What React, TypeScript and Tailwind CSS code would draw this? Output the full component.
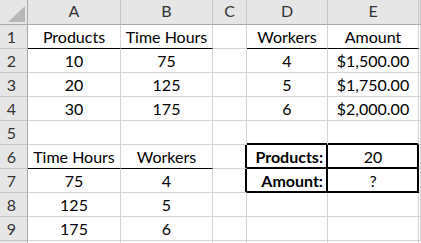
import type { ReactNode } from "react";

type CellProps = {
  children?: ReactNode;
  className?: string;
  align?: "center" | "right";
  bold?: boolean;
};

function Cell({ children, className = "", align = "center", bold = false }: CellProps) {
  return (
    <div
      className={`flex items-end border-b border-r border-[#d4d4d4] pb-[3px] text-[16px] leading-none text-black ${
        align === "right" ? "justify-end pr-[4px]" : "justify-center"
      } ${bold ? "font-bold" : ""} ${className}`}
    >
      {children}
    </div>
  );
}

function ColHead({ label }: { label: string }) {
  return (
    <div className="flex items-end justify-center border-b border-r border-b-[#ababab] border-r-[#c6c6c6] bg-[#e6e6e6] pb-[5px] text-[16px] leading-none text-[#333]">
      {label}
    </div>
  );
}

function RowHead({ n }: { n?: number }) {
  return (
    <div className="flex items-end justify-center border-b border-r border-b-[#c6c6c6] border-r-[#ababab] bg-[#e6e6e6] pb-[3px] pr-[4px] text-[16px] leading-none text-[#333]">
      {n}
    </div>
  );
}

const top = [
  ["10", "75", "4", "$1,500.00"],
  ["20", "125", "5", "$1,750.00"],
  ["30", "175", "6", "$2,000.00"],
];

export default function App() {
  return (
    <div
      className="grid h-[243px] w-[421px] grid-cols-[28px_93px_92px_34px_81px_91px_1fr] grid-rows-[25px_repeat(9,24px)_2px] overflow-hidden bg-white"
      style={{ fontFamily: "Lato, 'Noto Sans', sans-serif" }}
    >
      {/* header row */}
      <div className="flex items-end justify-end border-b border-r border-b-[#ababab] border-r-[#ababab] bg-[#e6e6e6] p-[2px]">
        <svg width="17" height="16" viewBox="0 0 17 16">
          <path d="M17 0 L17 16 L0 16 Z" fill="#b8b8b8" />
        </svg>
      </div>
      {["A", "B", "C", "D", "E", ""].map((c, i) => (
        <ColHead key={i} label={c} />
      ))}

      {/* row 1 */}
      <RowHead n={1} />
      <Cell className="border-b-black">Products</Cell>
      <Cell className="border-b-black">Time Hours</Cell>
      <Cell />
      <Cell className="border-b-black">Workers</Cell>
      <Cell className="border-b-black">Amount</Cell>
      <Cell />

      {top.map((r, i) => (
        <>
          <RowHead key={`h${i}`} n={i + 2} />
          <Cell key={`a${i}`}>{r[0]}</Cell>
          <Cell key={`b${i}`}>{r[1]}</Cell>
          <Cell key={`c${i}`} />
          <Cell key={`d${i}`}>{r[2]}</Cell>
          <Cell key={`e${i}`}>{r[3]}</Cell>
          <Cell key={`f${i}`} />
        </>
      ))}

      {/* row 5 */}
      <RowHead n={5} />
      <Cell />
      <Cell />
      <Cell />
      <Cell className="border-b-black shadow-[inset_0_-1px_0_#000]" />
      <Cell className="border-b-black shadow-[inset_0_-1px_0_#000]" />
      <Cell />

      {/* row 6 */}
      <RowHead n={6} />
      <Cell className="border-b-black">Time Hours</Cell>
      <Cell className="border-b-black">Workers</Cell>
      <Cell className="border-r-black shadow-[inset_-1px_0_0_#000]" />
      <Cell
        align="right"
        bold
        className="border-b-black border-r-black shadow-[inset_0_-1px_0_#000,inset_-1px_0_0_#000]"
      >
        Products:
      </Cell>
      <Cell className="border-b-black border-r-black shadow-[inset_0_-1px_0_#000,inset_-1px_0_0_#000]">
        20
      </Cell>
      <Cell />

      {/* row 7 */}
      <RowHead n={7} />
      <Cell>75</Cell>
      <Cell>4</Cell>
      <Cell className="border-r-black shadow-[inset_-1px_0_0_#000]" />
      <Cell
        align="right"
        bold
        className="border-b-black border-r-black shadow-[inset_0_-1px_0_#000,inset_-1px_0_0_#000]"
      >
        Amount:
      </Cell>
      <Cell className="border-b-black border-r-black shadow-[inset_0_-1px_0_#000,inset_-1px_0_0_#000]">
        ?
      </Cell>
      <Cell />

      {/* rows 8-9 */}
      {[
        ["125", "5"],
        ["175", "6"],
      ].map((r, i) => (
        <>
          <RowHead key={`h${i}`} n={i + 8} />
          <Cell key={`a${i}`}>{r[0]}</Cell>
          <Cell key={`b${i}`}>{r[1]}</Cell>
          <Cell key={`c${i}`} />
          <Cell key={`d${i}`} />
          <Cell key={`e${i}`} />
          <Cell key={`f${i}`} />
        </>
      ))}

      {/* start of row 10, cut off by the window */}
      <div className="border-r border-r-[#ababab] bg-[#e6e6e6]" />
      <div className="border-r border-[#d4d4d4]" />
      <div className="border-r border-[#d4d4d4]" />
      <div className="border-r border-[#d4d4d4]" />
      <div className="border-r border-[#d4d4d4]" />
      <div className="border-r border-[#d4d4d4]" />
      <div />
    </div>
  );
}
